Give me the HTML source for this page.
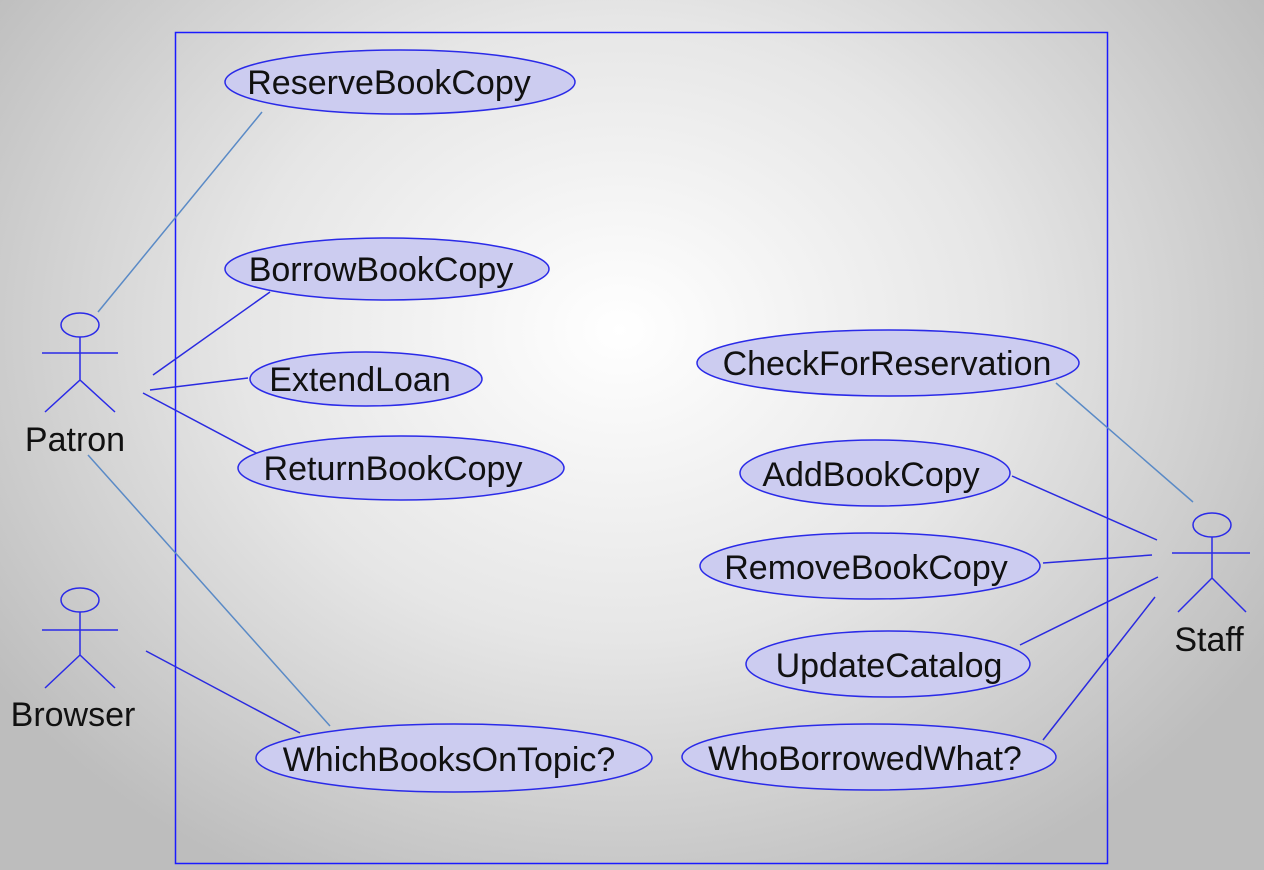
<!DOCTYPE html>
<html><head><meta charset="utf-8"><style>
html,body{margin:0;padding:0;width:1264px;height:870px;overflow:hidden}
body{background:radial-gradient(ellipse 760px 620px at 620px 330px,#ffffff 0%,#e6e6e6 50%,#bdbdbd 100%)}
svg{position:absolute;left:0;top:0}
text{font-family:"Liberation Sans",Arial,sans-serif;fill:#111}
</style></head><body>
<svg width="1264" height="870" viewBox="0 0 1264 870">
<rect x="175.5" y="32.5" width="932" height="831" fill="none" stroke="#1a1aff" stroke-width="1.5"/>
<g stroke="#5a8ac6" stroke-width="1.5">
<line x1="98" y1="312" x2="262" y2="112"/>
<line x1="88" y1="455" x2="330" y2="726"/>
<line x1="1056" y1="383" x2="1193" y2="502"/>
</g>
<g stroke="#2a2ae0" stroke-width="1.5">
<line x1="153" y1="375" x2="270" y2="292"/>
<line x1="150" y1="390" x2="248" y2="378"/>
<line x1="143" y1="393" x2="260" y2="455"/>
<line x1="146" y1="651" x2="300" y2="733"/>
<line x1="1012" y1="476" x2="1157" y2="540"/>
<line x1="1043" y1="563" x2="1152" y2="555"/>
<line x1="1020" y1="645" x2="1158" y2="577"/>
<line x1="1043" y1="740" x2="1155" y2="597"/>
</g>
<g fill="#ccccf0" stroke="#2a2ae8" stroke-width="1.5">
<ellipse cx="400" cy="82" rx="175" ry="32"/>
<ellipse cx="387" cy="269" rx="162" ry="31"/>
<ellipse cx="366" cy="379" rx="116" ry="27"/>
<ellipse cx="401" cy="468" rx="163" ry="32"/>
<ellipse cx="454" cy="758" rx="198" ry="34"/>
<ellipse cx="888" cy="363" rx="191" ry="33"/>
<ellipse cx="875" cy="473" rx="135" ry="33"/>
<ellipse cx="870" cy="566" rx="170" ry="33"/>
<ellipse cx="888" cy="664" rx="142" ry="33"/>
<ellipse cx="869" cy="757" rx="187" ry="33"/>
</g>
<g font-size="34" text-anchor="middle">
<text x="389" y="94">ReserveBookCopy</text>
<text x="381" y="281">BorrowBookCopy</text>
<text x="360" y="391">ExtendLoan</text>
<text x="393" y="480">ReturnBookCopy</text>
<text x="449" y="771">WhichBooksOnTopic?</text>
<text x="887" y="375">CheckForReservation</text>
<text x="871" y="486">AddBookCopy</text>
<text x="866" y="579">RemoveBookCopy</text>
<text x="889" y="677">UpdateCatalog</text>
<text x="865" y="770">WhoBorrowedWhat?</text>
</g>
<g fill="none" stroke="#2a2ae8" stroke-width="1.5">
<ellipse cx="80" cy="325" rx="19" ry="12"/>
<path d="M80 337V380M42 353H118M80 380L45 412M80 380L115 412"/>
<ellipse cx="80" cy="600" rx="19" ry="12"/>
<path d="M80 612V655M42 630H118M80 655L45 688M80 655L115 688"/>
<ellipse cx="1212" cy="525" rx="19" ry="12"/>
<path d="M1212 537V578M1172 553H1250M1212 578L1178 612M1212 578L1246 612"/>
</g>
<g font-size="34" text-anchor="middle">
<text x="75" y="451">Patron</text>
<text x="73" y="726">Browser</text>
<text x="1209" y="651">Staff</text>
</g>
</svg>
</body></html>
